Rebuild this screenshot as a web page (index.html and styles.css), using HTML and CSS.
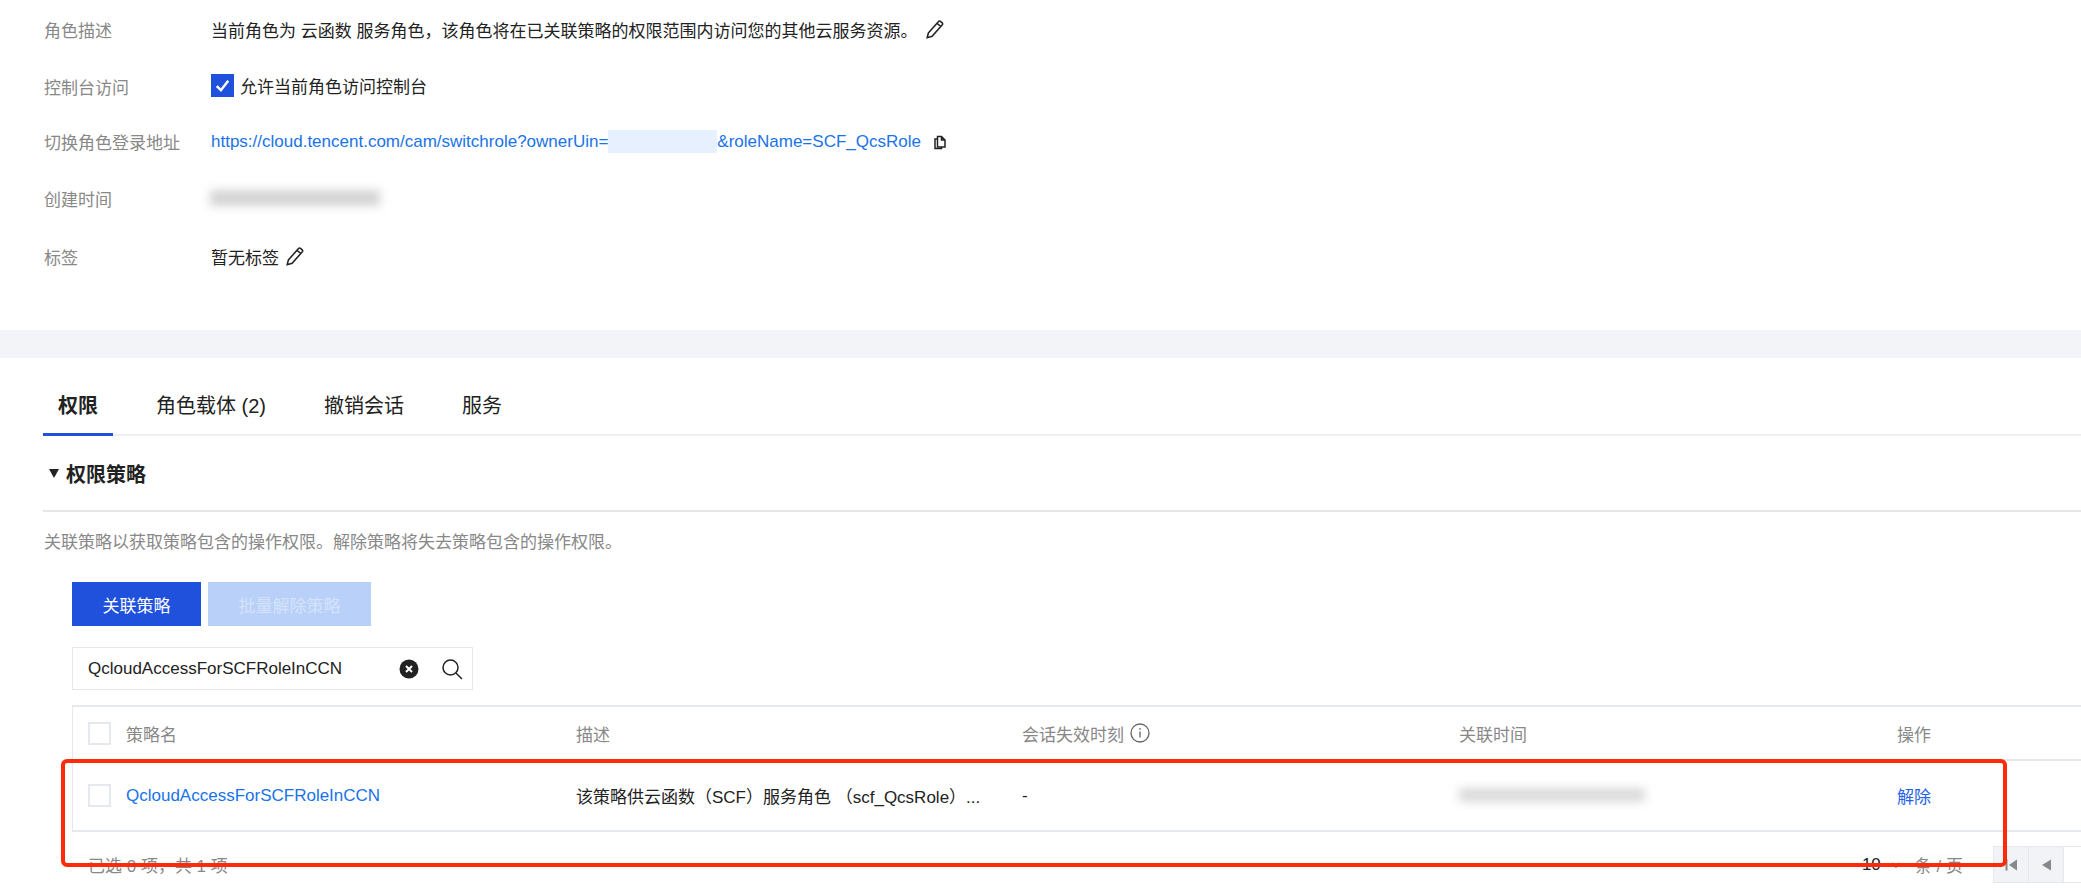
FILE: index.html
```html
<!DOCTYPE html>
<html lang="zh">
<head>
<meta charset="utf-8">
<title>角色详情</title>
<link rel="stylesheet" href="styles.css">
</head>
<body>
<div class="page">
  <section class="info">
    <div class="label">角色描述</div>
    <div class="value">当前角色为 云函数 服务角色，该角色将在已关联策略的权限范围内访问您的其他云服务资源。<svg class="pencil" viewBox="0 0 18 18"><path d="M3 12.6 12.2 2.2a1.2 1.2 0 0 1 1.7-.1l1.6 1.4a1.2 1.2 0 0 1 .1 1.7L6.4 15.6 2 16.8zM10.8 3.8l3.8 3.3" /></svg></div>
    <div class="label">控制台访问</div>
    <div class="value value-check"><span class="check"><svg viewBox="0 0 22 22"><path d="M5.5 11.5 9.5 15.5 16.5 6.5"/></svg></span>允许当前角色访问控制台</div>
    <div class="label">切换角色登录地址</div>
    <div class="value value-link"><a class="link">https://cloud.tencent.com/cam/switchrole?ownerUin=</a><span class="uin-mask"></span><a class="link">&amp;roleName=SCF_QcsRole</a><svg class="copy" viewBox="0 0 14 16"><path d="M4.5 2.5h4l3.5 3.5v7h-7.500zM8.500 2.500v3.500h3.500"/><path d="M4.500 5H2v9.500h6.500V13"/></svg></div>
    <div class="label">创建时间</div>
    <div class="value"><span class="blur blur-created"></span></div>
    <div class="label">标签</div>
    <div class="value">暂无标签<svg class="pencil pencil-tag" viewBox="0 0 18 18"><path d="M3 12.6 12.2 2.2a1.2 1.2 0 0 1 1.7-.1l1.6 1.4a1.2 1.2 0 0 1 .1 1.7L6.4 15.6 2 16.8zM10.8 3.8l3.800 3.300"/></svg></div>
  </section>

  <div class="band"></div>

  <section class="detail">
    <nav class="tabs">
      <a class="tab tab-active">权限</a>
      <a class="tab">角色载体 (2)</a>
      <a class="tab">撤销会话</a>
      <a class="tab">服务</a>
    </nav>

    <h2 class="section-title"><span class="caret"></span>权限策略</h2>
    <p class="hint">关联策略以获取策略包含的操作权限。解除策略将失去策略包含的操作权限。</p>

    <div class="panel">
      <div class="actions">
        <button class="btn btn-primary">关联策略</button>
        <button class="btn btn-disabled">批量解除策略</button>
      </div>

      <div class="search">
        <span class="search-text">QcloudAccessForSCFRoleInCCN</span>
        <svg class="clear" viewBox="0 0 20 20"><circle cx="10" cy="10" r="9.500"/><path d="M7 7l6 6M13 7l-6 6"/></svg>
        <svg class="magnifier" viewBox="0 0 22 22"><circle cx="9.500" cy="9.500" r="7.500"/><path d="M15 15l6 6"/></svg>
      </div>

      <div class="table">
        <div class="table-row table-head">
          <div class="cell cell-name"><span class="box"></span>策略名</div>
          <div class="cell">描述</div>
          <div class="cell">会话失效时刻<svg class="info-icon" viewBox="0 0 20 20"><circle cx="10" cy="10" r="9"/><path d="M10 8.500v6M10 5v1.800"/></svg></div>
          <div class="cell">关联时间</div>
          <div class="cell">操作</div>
        </div>
        <div class="table-row table-body">
          <div class="cell cell-name"><span class="box"></span><a class="link">QcloudAccessForSCFRoleInCCN</a></div>
          <div class="cell cell-dark">该策略供云函数（SCF）服务角色 （scf_QcsRole）...</div>
          <div class="cell cell-dark">-</div>
          <div class="cell"><span class="blur blur-time"></span></div>
          <div class="cell"><a class="action">解除</a></div>
        </div>
      </div>

      <div class="footer">
        <span class="count">已选 0 项，共 1 项</span>
        <div class="pager">
          <span class="page-size">10</span>
          <svg class="size-caret" viewBox="0 0 10 6"><path d="M1 1l4 4 4-4"/></svg>
          <span class="page-unit">条 / 页</span>
          <div class="pager-buttons">
            <span class="pager-btn"><svg viewBox="0 0 14 14"><path d="M1.500 1.500h2v11h-2zM13 1.500v11L5 7z"/></svg></span>
            <span class="pager-btn"><svg viewBox="0 0 14 14"><path d="M12 1.500v11L3 7z"/></svg></span>
            <span class="pager-input"></span>
          </div>
        </div>
      </div>
    </div>
  </section>

  <div class="highlight"></div>
</div>
</body>
</html>
```

FILE: styles.css
```css
* { box-sizing: border-box; }
html, body { margin: 0; padding: 0; background: #fff; }
body {
  font-family: "Liberation Sans", "Noto Sans CJK SC", sans-serif;
  font-size: 17px;
  color: #222;
}
.page { position: relative; width: 2081px; height: 892px; overflow: hidden; }

.info {
  display: grid;
  grid-template-columns: 167px 1fr;
  grid-template-rows: 58px 56px 55px 58px 58px;
  height: 330px;
  padding-left: 44px;
  align-items: center;
}
.label { color: #888; }
.value { display: flex; align-items: center; white-space: pre; color: #222; }
.pencil { width: 20px; height: 20px; margin-left: 8px; fill: none; stroke: #222; stroke-width: 1.400; }
.pencil-tag { margin-left: 6px; }
.value-check { margin-top: -2px; }
.check {
  display: flex;
  width: 23px;
  height: 23px;
  margin-right: 6px;
  background: #1f51dd;
}
.check svg { width: 23px; height: 23px; fill: none; stroke: #fff; stroke-width: 2.400; }
.link { color: #1a73e8; white-space: nowrap; }
.uin-mask { width: 109px; height: 23px; background: #e6f0fe; }
.copy { width: 14px; height: 16px; margin-left: 12px; fill: none; stroke: #222; stroke-width: 1.500; }
.blur { display: block; background: #d4d4d4; filter: blur(5px); }
.blur-created { width: 170px; height: 16px; margin-left: 0; margin-left: -1px; }
.blur-time { width: 186px; height: 14px; margin-left: 0; margin-top: -2px; opacity: .85; }

.band { height: 28px; background: #f3f4f7; }

.detail { padding-left: 43px; }
.tabs {
  display: flex;
  height: 78px;
  align-items: flex-end;
  border-bottom: 2px solid #eef0f4;
}
.tab {
  display: block;
  height: 44px;
  padding: 0 15px;
  margin-right: 28px;
  font-size: 20px;
  line-height: 28px;
  color: #222;
  white-space: pre;
  margin-bottom: -2px;
}
.tab-active {
  margin-right: 28px;
  font-weight: 700;
  border-bottom: 3px solid #1f51dd;
}
.section-title {
  display: flex;
  align-items: center;
  height: 76px;
  margin: 0;
  font-size: 20px;
  font-weight: 700;
  color: #222;
  border-bottom: 2px solid #e6e6e6;
}
.caret {
  width: 0;
  height: 0;
  margin: 0 7px 0 6px;
  border-left: 5.500px solid transparent;
  border-right: 5.500px solid transparent;
  border-top: 9px solid #222;
}
.hint { height: 70px; margin: 0; padding-top: 19px; line-height: 23px; color: #888; padding-left: 1px; }

.panel { padding-left: 29px; }
.actions { display: flex; gap: 7px; height: 44px; }
.btn {
  height: 44px;
  border: 0;
  padding: 0;
  font: inherit;
  color: #fff;
}
.btn-primary { width: 129px; background: #1f51dd; }
.btn-disabled { width: 163px; background: #b9d0f8; color: #d5e3fb; }

.search {
  display: flex;
  align-items: center;
  width: 401px;
  height: 43px;
  margin-top: 21px;
  padding-left: 15px;
  border: 1px solid #e6e8f0;
  background: #fff;
}
.search-text { width: 311px; }
.clear { width: 20px; height: 20px; }
.clear circle { fill: #222; }
.clear path { fill: none; stroke: #fff; stroke-width: 2; }
.magnifier { width: 22px; height: 22px; margin-left: 22px; fill: none; stroke: #222; stroke-width: 1.500; }

.table {
  width: 2100px;
  margin-top: 15px;
  border: 1px solid #e6e8f0;
  border-width: 2px 0 2px 1px;
}
.table-row {
  display: grid;
  grid-template-columns: 503px 446px 437px 438px 1fr;
  align-items: center;
}
.table-head { height: 54px; color: #888; border-bottom: 2px solid #e6e8f0; }
.table-body { height: 69px; }
.cell { display: flex; align-items: center; white-space: pre; min-width: 0; }
.cell-name { padding-left: 15px; }
.cell-dark { color: #222; }
.box {
  width: 23px;
  height: 23px;
  margin-right: 15px;
  border: 2px solid #e6e8f0;
  background: #fff;
}
.info-icon { width: 20px; height: 20px; margin-left: 6px; fill: none; stroke: #666; stroke-width: 1.300; }
.action { color: #2563e8; }

.footer {
  display: flex;
  justify-content: space-between;
  align-items: center;
  height: 37px;
  margin-top: 14px;
  padding-left: 16px;
  color: #888;
  width: 2009px;
}
.pager { display: flex; align-items: center; }
.page-size { color: #222; }
.size-caret { width: 10px; height: 6px; margin: 0 14px 0 10px; fill: none; stroke: #666; stroke-width: 1.500; }
.pager-buttons {
  display: flex;
  height: 37px;
  margin-left: 30px;
  width: 88px;
}
.pager-btn {
  display: flex;
  align-items: center;
  justify-content: center;
  width: 36px;
  background: #f2f3f6;
  border: 1px solid #e6e8f0;
  margin-right: -1px;
}
.pager-btn svg { width: 14px; height: 14px; fill: #888; }
.pager-input { flex: 1; border: 1px solid #e6e8f0; border-right: 0; }

.highlight {
  position: absolute;
  left: 61px;
  top: 759px;
  width: 1946px;
  height: 108px;
  border: 4px solid #ff2a0a;
  border-radius: 6px;
}
```
